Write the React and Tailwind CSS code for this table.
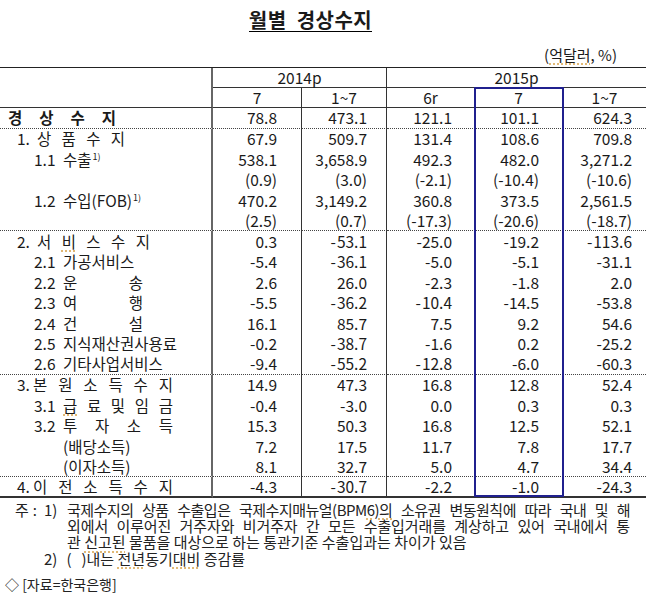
import React from 'react';

const PR = ['pr-[24px]', 'pr-[19px]', 'pr-[22px]', 'pr-[23px]', 'pr-[14px]'];
const T = '\u200a';

const rows = [
  { label: { type: 'total', chars: ['경', '상', '수', '지'] }, v: ['78.8', '473.1', '121.1', '101.1', '624.3'], line: 'dot' },
  { label: { type: 'l1', num: '1.', chars: ['상', '품', '수', '지'], w: 88 }, v: ['67.9', '509.7', '131.4', '108.6', '709.8'] },
  { label: { type: 'l2', num: '1.1', text: '수출', sup: '1)' }, v: ['538.1', '3,658.9', '492.3', '482.0', '3,271.2'] },
  { label: null, v: ['(0.9)', '(3.0)', '(-2.1)', '(-10.4)', '(-10.6)'] },
  { label: { type: 'l2', num: '1.2', text: '수입(FOB)', sup: '1)' }, v: ['470.2', '3,149.2', '360.8', '373.5', '2,561.5'] },
  { label: null, v: ['(2.5)', '(0.7)', '(-17.3)', '(-20.6)', '(-18.7)'], line: 'dot' },
  { label: { type: 'l1', num: '2.', chars: ['서', '비', '스', '수', '지'], w: 113, mark: 1 }, v: ['0.3', `-${T}53.1`, '-25.0', '-19.2', `-${T}113.6`] },
  { label: { type: 'l2', num: '2.1', text: '가공서비스' }, v: ['-5.4', `-${T}36.1`, '-5.0', '-5.1', '-31.1'] },
  { label: { type: 'l2j', num: '2.2', chars: ['운', '송'], w: 80 }, v: ['2.6', '26.0', '-2.3', '-1.8', '2.0'] },
  { label: { type: 'l2j', num: '2.3', chars: ['여', '행'], w: 80 }, v: ['-5.5', `-${T}36.2`, `-${T}10.4`, '-14.5', '-53.8'] },
  { label: { type: 'l2j', num: '2.4', chars: ['건', '설'], w: 80 }, v: ['16.1', '85.7', '7.5', '9.2', '54.6'] },
  { label: { type: 'l2', num: '2.5', text: '지식재산권사용료' }, v: ['-0.2', `-${T}38.7`, '-1.6', '0.2', '-25.2'] },
  { label: { type: 'l2', num: '2.6', text: '기타사업서비스' }, v: ['-9.4', `-${T}55.2`, `-${T}12.8`, '-6.0', '-60.3'], line: 'dot' },
  { label: { type: 'l1', num: '3.', chars: ['본', '원', '소', '득', '수', '지'], w: 140, tight: true }, v: ['14.9', '47.3', '16.8', '12.8', '52.4'] },
  { label: { type: 'l2j', num: '3.1', chars: ['급', '료', '및', '임', '금'], w: 110, mark: 0 }, v: ['-0.4', '-3.0', '0.0', '0.3', '0.3'] },
  { label: { type: 'l2j', num: '3.2', chars: ['투', '자', '소', '득'], w: 110 }, v: ['15.3', '50.3', '16.8', '12.5', '52.1'] },
  { label: { type: 'sub', text: '(배당소득)' }, v: ['7.2', '17.5', '11.7', '7.8', '17.7'] },
  { label: { type: 'sub', text: '(이자소득)' }, v: ['8.1', '32.7', '5.0', '4.7', '34.4'], line: 'dot' },
  { label: { type: 'l1', num: '4.', chars: ['이', '전', '소', '득', '수', '지'], w: 140, tight: true }, v: ['-4.3', `-${T}30.7`, '-2.2', '-1.0', '-24.3'], line: 'bottom' },
];

const squiggle = 'underline decoration-dotted decoration-[#d8a24a] underline-offset-[3px]';

const Chars = ({ chars, w, mark }) => (
  <span className="flex justify-between" style={{ width: w }}>
    {chars.map((c, i) => (
      <span key={i} className={i === mark ? squiggle : ''}>{c}</span>
    ))}
  </span>
);

const Label = ({ label }) => {
  if (!label) return null;
  if (label.type === 'total') {
    return (
      <div className="pl-[8px] font-bold">
        <Chars chars={label.chars} w={108} />
      </div>
    );
  }
  if (label.type === 'l1') {
    return (
      <div className="flex pl-[17px]">
        <span className={label.tight ? 'w-[16px]' : 'w-[20px]'}>{label.num}</span>
        <Chars chars={label.chars} w={label.w} mark={label.mark} />
      </div>
    );
  }
  if (label.type === 'l2' || label.type === 'l2j') {
    return (
      <div className="flex pl-[34px]">
        <span className="w-[29px]">{label.num}</span>
        {label.type === 'l2j' ? (
          <Chars chars={label.chars} w={label.w} mark={label.mark} />
        ) : (
          <span>
            {label.text}
            {label.sup && <sup className="text-[9px] ml-[1px] relative -top-[6px]">{label.sup}</sup>}
          </span>
        )}
      </div>
    );
  }
  return <div className="pl-[63px]">{label.text}</div>;
};

export default function App() {
  return (
    <div className="w-[646px] h-[595px] bg-white text-[#1a1a1a] overflow-hidden font-['Noto_Sans_CJK_KR','Noto_Sans',sans-serif]">
      {/* Title */}
      <div className="flex justify-center pr-[25px] pt-[8px]">
        <h1 className="text-[20px] font-bold leading-[23px] border-b border-black tracking-[0.5px]">
          월별&nbsp;&nbsp;경상수지
        </h1>
      </div>
      <div className="mt-[14px] pr-[29px] text-right text-[15px] leading-[18px]">
        (<span className={squiggle}>억달러</span>, %)
      </div>

      {/* Table */}
      <div className="relative mt-[3px] border-t border-[#222] text-[15.5px] leading-none">
        <div className="grid grid-cols-[213px_89px_85px_88px_88px_83px] grid-rows-[20px_20px_repeat(19,20.5px)]">
          {/* header */}
          <div className="row-span-2 border-r-2 border-b border-r-[#666] border-b-[#333]" />
          <div className="col-span-2 flex items-center justify-center border-r border-b border-[#333]">2014p</div>
          <div className="col-span-3 flex items-center justify-center border-b border-[#333]">2015p</div>
          {['7', '1~7', '6r', '7', '1~7'].map((h, i) => (
            <div
              key={i}
              className={`flex items-center justify-center border-b border-b-[#333] ${i < 4 ? 'border-r border-r-[#333]' : ''}`}
            >
              {h}
            </div>
          ))}

          {/* body */}
          {rows.map((r, ri) => {
            const bottom =
              r.line === 'dot'
                ? 'border-b [border-bottom-style:dotted] border-b-[#444]'
                : r.line === 'bottom'
                ? 'border-b-2 border-b-[#333]'
                : '';
            return (
              <React.Fragment key={ri}>
                <div className={`flex items-center border-r-2 border-r-[#666] ${bottom}`}>
                  <Label label={r.label} />
                </div>
                {r.v.map((val, ci) => (
                  <div
                    key={ci}
                    className={`flex items-center justify-end whitespace-pre ${PR[ci]} ${ci < 4 ? 'border-r border-r-[#333]' : ''} ${bottom}`}
                  >
                    {val}
                  </div>
                ))}
              </React.Fragment>
            );
          })}
        </div>
        {/* highlight box around 2015 July */}
        <div className="absolute left-[474px] top-[19px] w-[90px] h-[410px] border-2 border-[#20208e] pointer-events-none" />
      </div>

      {/* Notes */}
      <div className="mt-[4px] text-[15px] leading-[16.4px] text-[#222]">
        <div className="flex">
          <div className="w-[67px] shrink-0 flex pl-[15px]">
            <span>주</span>
            <span className="ml-[4px]">:</span>
            <span className="ml-[7px]">1)</span>
          </div>
          <div className="w-[563px]">
            <div className="whitespace-nowrap tracking-[-0.5px] [text-align-last:justify]">
              국제수지의 상품 수출입은 국제수지매뉴얼(BPM<span className={squiggle}>6)의</span> 소유권 변동원칙에 따라 국내 및 해
            </div>
            <div className="whitespace-nowrap tracking-[-0.1px] [text-align-last:justify]">
              외에서 이루어진 거주자와 비거주자 간 모든 수출입거래를 계상하고 있어 국내에서 통
            </div>
            <div>
              관 <span className={squiggle}>신고된</span> 물품을 대상으로 하는 통관기준 수출입과는 차이가 있음
            </div>
          </div>
        </div>
        <div className="flex pl-[44px]">
          <span>2)</span>
          <span className="ml-[9px]">(</span>
          <span className="ml-[10px]">
            )내는 <span className={squiggle}>전년</span>동기<span className={squiggle}>대비</span> 증감률
          </span>
        </div>
      </div>
      <div className="mt-[8px] pl-[5px] text-[14px] leading-[18px] text-[#222]">◇ [자료=한국은행]</div>
    </div>
  );
}
